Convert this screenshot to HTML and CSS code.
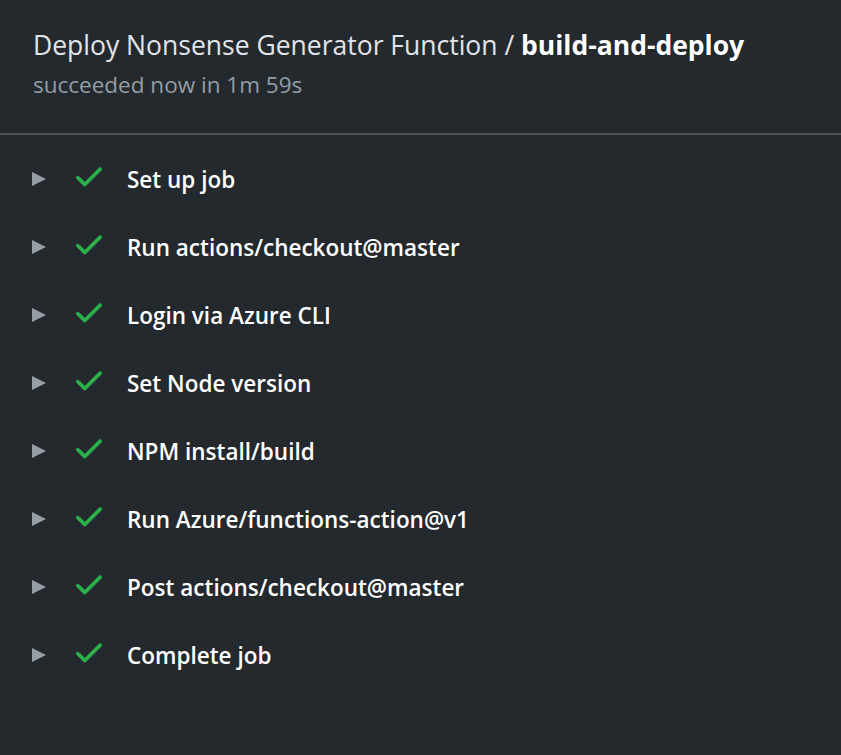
FILE: index.html
```html
<!DOCTYPE html>
<html>
<head>
<meta charset="utf-8">
<link rel="stylesheet" href="styles.css">
</head>
<body>
<div class="page">
  <header class="header">
    <h1 class="title">Deploy Nonsense Generator Function / <strong>build-and-deploy</strong></h1>
    <div class="subtitle">succeeded now in 1m 59s</div>
  </header>
  <ul class="steps">
    <li class="step"><span class="caret"></span><svg class="check" viewBox="0 0 16 16" width="34" height="34"><path d="M13.78 4.22a.75.75 0 010 1.06l-7.25 7.25a.75.75 0 01-1.06 0L2.22 9.28a.75.75 0 011.06-1.06L6 10.94l6.72-6.72a.75.75 0 011.06 0z"/></svg><span class="name">Set up job</span></li>
    <li class="step"><span class="caret"></span><svg class="check" viewBox="0 0 16 16" width="34" height="34"><path d="M13.78 4.22a.75.75 0 010 1.06l-7.25 7.25a.75.75 0 01-1.06 0L2.22 9.28a.75.75 0 011.06-1.06L6 10.94l6.72-6.72a.75.75 0 011.06 0z"/></svg><span class="name">Run actions/checkout@master</span></li>
    <li class="step"><span class="caret"></span><svg class="check" viewBox="0 0 16 16" width="34" height="34"><path d="M13.78 4.22a.75.75 0 010 1.06l-7.25 7.25a.75.75 0 01-1.06 0L2.22 9.28a.75.75 0 011.06-1.06L6 10.94l6.72-6.72a.75.75 0 011.06 0z"/></svg><span class="name">Login via Azure CLI</span></li>
    <li class="step"><span class="caret"></span><svg class="check" viewBox="0 0 16 16" width="34" height="34"><path d="M13.78 4.22a.75.75 0 010 1.06l-7.25 7.25a.75.75 0 01-1.06 0L2.22 9.28a.75.75 0 011.06-1.06L6 10.94l6.72-6.72a.75.75 0 011.06 0z"/></svg><span class="name">Set Node version</span></li>
    <li class="step"><span class="caret"></span><svg class="check" viewBox="0 0 16 16" width="34" height="34"><path d="M13.78 4.22a.75.75 0 010 1.06l-7.25 7.25a.75.75 0 01-1.06 0L2.22 9.28a.75.75 0 011.06-1.06L6 10.94l6.72-6.72a.75.75 0 011.06 0z"/></svg><span class="name">NPM install/build</span></li>
    <li class="step"><span class="caret"></span><svg class="check" viewBox="0 0 16 16" width="34" height="34"><path d="M13.78 4.22a.75.75 0 010 1.06l-7.25 7.25a.75.75 0 01-1.06 0L2.22 9.28a.75.75 0 011.06-1.06L6 10.94l6.72-6.72a.75.75 0 011.06 0z"/></svg><span class="name">Run Azure/functions-action@v1</span></li>
    <li class="step"><span class="caret"></span><svg class="check" viewBox="0 0 16 16" width="34" height="34"><path d="M13.78 4.22a.75.75 0 010 1.06l-7.25 7.25a.75.75 0 01-1.06 0L2.22 9.28a.75.75 0 011.06-1.06L6 10.94l6.72-6.72a.75.75 0 011.06 0z"/></svg><span class="name">Post actions/checkout@master</span></li>
    <li class="step"><span class="caret"></span><svg class="check" viewBox="0 0 16 16" width="34" height="34"><path d="M13.78 4.22a.75.75 0 010 1.06l-7.25 7.25a.75.75 0 01-1.06 0L2.22 9.28a.75.75 0 011.06-1.06L6 10.94l6.72-6.72a.75.75 0 011.06 0z"/></svg><span class="name">Complete job</span></li>
  </ul>
</div>
</body>
</html>
```
FILE: styles.css
```css
html, body {
  margin: 0;
  padding: 0;
  background: #24292e;
  height: 100%;
}
body {
  font-family: "Open Sans", "Noto Sans", sans-serif;
  color: #e1e4e8;
}
.page {
  width: 841px;
  height: 755px;
  overflow: hidden;
}
.header {
  padding: 27px 33px 0 33px;
  height: 135px;
  box-sizing: border-box;
  border-bottom: 2px solid #4a5159;
}
.title {
  margin: 0;
  font-size: 26.5px;
  font-weight: 400;
  line-height: 36px;
  color: #e1e4e8;
}
.title strong {
  font-weight: 700;
  color: #ffffff;
}
.subtitle {
  margin-top: 7px;
  font-size: 22.5px;
  line-height: 30px;
  color: #959da5;
}
.steps {
  list-style: none;
  margin: 0;
  padding: 10px 0 0 0;
}
.step {
  display: flex;
  align-items: center;
  height: 68px;
  padding-left: 32px;
}
.caret {
  width: 0;
  height: 0;
  border-top: 7.5px solid transparent;
  border-bottom: 7.5px solid transparent;
  border-left: 14px solid #959da5;
  margin-right: 26px;
}
.check {
  fill: #2cb24c;
  stroke: #2cb24c;
  stroke-width: 0.3;
  stroke-linejoin: round;
  margin-bottom: 6px;
  margin-right: 21px;
}
.name {
  font-size: 22.5px;
  font-weight: 600;
  color: #ffffff;
}
```
